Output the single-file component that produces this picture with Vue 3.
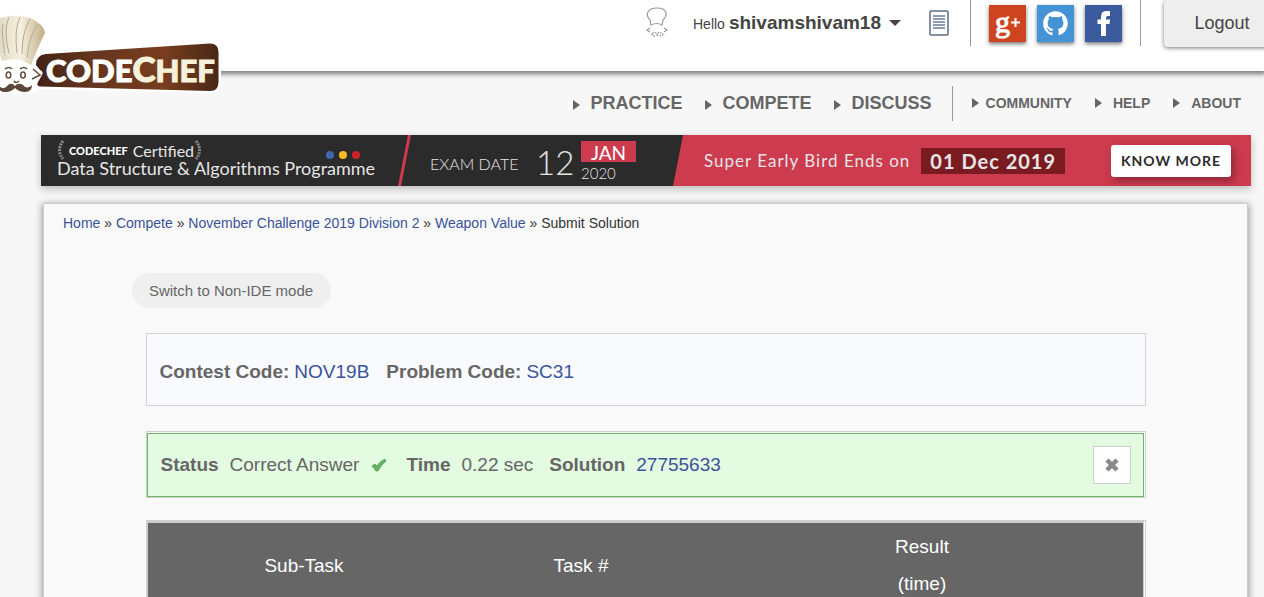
<script setup>
const mainNav = ['PRACTICE', 'COMPETE', 'DISCUSS']
const subNav = ['COMMUNITY', 'HELP', 'ABOUT']
const crumbs = ['Home', 'Compete', 'November Challenge 2019 Division 2', 'Weapon Value']
</script>

<template>
  <div class="page">
    <header class="top">
      <a class="logo" href="#" aria-label="CodeChef">
        <svg width="224" height="86" viewBox="0 10 224 86">
          <defs>
            <linearGradient id="wood"><stop offset="0" stop-color="#432315" /><stop offset=".3" stop-color="#65351e" /><stop offset=".7" stop-color="#783d1f" /><stop offset="1" stop-color="#492816" /></linearGradient>
            <linearGradient id="hat"><stop offset="0" stop-color="#e2dac6" /><stop offset=".45" stop-color="#f5f0df" /><stop offset="1" stop-color="#c0ad86" /></linearGradient>
          </defs>
          <path d="M42 52L211 41Q221 41 221 51V84Q221 93 211 93L39 89L30 94H0V60L38 58Z" fill="#fff" />
          <path d="M46 54L210 43.500Q218.500 43.500 218.500 52V82Q218.500 91 210 91L40 86.500Q36 86 38 82L42 75Q44 72 40 70L36 65Q36 55 46 54Z" fill="url(#wood)" />
          <path d="M0 54Q20 48 31 60L34 68L40 75L32 80L28 89L0 92Z" fill="#fff" />
          <path d="M0 18Q17 13 30 18Q44 24 45 33Q38 47 31 65Q18 56 2 61L0 55Z" fill="url(#hat)" />
          <g fill="none" stroke="#b6aa91" stroke-width="1">
            <path d="M9 17Q3 29 9 54M20 17Q14 29 17 53M30 19Q22 32 22 54M38 24Q29 35 27 58M3 24Q1 30 5 56" />
            <path d="M0 55Q17 50 31 61" stroke="#eee9dc" />
          </g>
          <g fill="none" stroke="#66503f" stroke-width="1.600">
            <ellipse cx="8.500" cy="75" rx="2.300" ry="3" /><ellipse cx="23" cy="75" rx="2.300" ry="3" />
            <path d="M5 69Q9 66 12 69M20 69Q24 66 27 69M33 69L40 75L32 79M14 81Q16 84 19 81" />
          </g>
          <path d="M0 87Q5 90 8 85Q12 82 15 86Q18 82 23 85Q27 90 32 85Q32 92 25 92Q19 92 15 88Q11 92 6 92Q1 92 0 90Z" fill="#5d4639" />
          <text x="46" y="82" fill="#fff" stroke="#fff" class="logo-text">CODE<tspan fill="#f6f1db" stroke="#f6f1db"><tspan class="big">C</tspan>HEF</tspan></text>
        </svg>
      </a>
      <div class="user">
        <svg width="24" height="32" viewBox="0 0 24 32" fill="none" stroke="#999" stroke-width="1.200">
          <path d="M6 18L5 13Q1 9 3 5Q5 1 12 1Q20 1 21 6Q22 9 18 13L17 18Q12 15 6 18Z" />
          <path d="M5 21L2 23L5 25M19 21L22 23L19 25" /><path d="M7 27Q10 24 12 27Q15 24 18 27Q17 30 12 28Q7 30 7 27Z" stroke-dasharray="2 1" />
        </svg>
        <button class="account" type="button"><span>Hello</span> <b>shivamshivam18</b><i class="caret"></i></button>
        <svg class="doc" width="20" height="26" viewBox="0 0 20 26"><rect x="1" y="1" width="18" height="24" rx="1" fill="#fff" stroke="#5d6d85" stroke-width="1.500" /><path d="M4 6H16M4 9H16M4 12H16M4 15H16M4 18H16" stroke="#677d9b" stroke-width="1.500" /></svg>
      </div>
      <div class="social">
        <a href="#" class="google" aria-label="Google Plus"><svg width="37" height="37"><text x="6" y="27" class="g" fill="#fff">g</text><path d="M22 17.500H31M26.500 13V22" stroke="#fff" stroke-width="2" /></svg></a>
        <a href="#" class="github" aria-label="GitHub"><svg width="37" height="37" viewBox="-4 -4 24 24"><path fill="#fff" d="M8 0C3.580 0 0 3.580 0 8c0 3.540 2.290 6.530 5.470 7.590.4.070.55-.17.55-.38 0-.19-.01-.82-.01-1.490-2.010.37-2.530-.49-2.690-.94-.09-.23-.48-.94-.82-1.130-.28-.15-.68-.52-.01-.53.630-.01 1.080.58 1.230.82.720 1.210 1.870.87 2.330.66.070-.52.280-.87.510-1.070-1.780-.2-3.640-.89-3.640-3.950 0-.87.310-1.590.82-2.150-.08-.2-.36-1.020.08-2.120 0 0 .67-.21 2.200.82.640-.18 1.320-.27 2-.27s1.360.09 2 .27c1.530-1.040 2.200-.82 2.200-.82.440 1.100.160 1.920.080 2.120.510.560.820 1.270.820 2.150 0 3.070-1.870 3.750-3.650 3.950.290.250.540.730.540 1.480 0 1.070-.01 1.930-.01 2.200 0 .21.150.46.550.38A8.010 8.010 0 0 0 16 8c0-4.420-3.580-8-8-8Z" /></svg></a>
        <a href="#" class="facebook" aria-label="Facebook"><svg width="37" height="37"><path fill="#fff" d="M16 31V19H12.500V14.500H16V12Q16 6 21 6H25V11H22.500Q21 11 21 13V14.500H25L24.500 19H21V31Z" /></svg></a>
      </div>
      <button class="logout" type="button">Logout</button>
    </header>

    <nav class="nav">
      <div class="main-nav"><a v-for="item in mainNav" :key="item" href="#">{{ item }}</a></div>
      <div class="sub-nav"><a v-for="item in subNav" :key="item" href="#">{{ item }}</a></div>
    </nav>

    <section class="banner">
      <div class="programme">
        <div class="certified">
          <svg width="8" height="20" viewBox="0 0 8 20"><path d="M6 1Q-1 10 6 19" fill="none" stroke="#888" stroke-width="3" stroke-dasharray="2 1" /></svg>
          <b>CODECHEF</b><span>Certified</span>
          <svg width="8" height="20" viewBox="0 0 8 20"><path d="M2 1Q9 10 2 19" fill="none" stroke="#888" stroke-width="3" stroke-dasharray="2 1" /></svg>
          <span class="dots"><i></i><i></i><i></i></span>
        </div>
        <div class="title">Data Structure &amp; Algorithms Programme</div>
      </div>
      <div class="slash"></div>
      <div class="exam">
        <span class="label">EXAM DATE</span>
        <span class="day">12</span>
        <div class="month"><b>JAN</b><span>2020</span></div>
      </div>
      <div class="offer">
        <span class="ends">Super Early Bird Ends on</span>
        <strong>01 Dec 2019</strong>
        <button class="more" type="button">KNOW MORE</button>
      </div>
    </section>

    <main class="content">
      <div class="crumbs">
        <template v-for="c in crumbs" :key="c"><a href="#">{{ c }}</a> » </template>Submit Solution
      </div>
      <div class="body">
        <button class="switch" type="button">Switch to Non-IDE mode</button>
        <div class="codes">
          <div><b>Contest Code:</b><a href="#">NOV19B</a></div>
          <div><b>Problem Code:</b><a href="#">SC31</a></div>
        </div>
        <div class="frame status-frame">
          <div class="status">
            <b>Status</b><span>Correct Answer</span>
            <svg class="tick" width="16" height="16" viewBox="0 0 16 16"><path d="M1 9L4 7L6 9Q9 4 14 2L15 4Q10 8 7 14H5Z" fill="#63b365" stroke="#4d9d51" stroke-width=".7" /></svg>
            <b>Time</b><span>0.22 sec</span>
            <b class="solution">Solution</b><a href="#">27755633</a>
            <button class="close" type="button" aria-label="Close"><svg width="14" height="14" viewBox="0 0 14 14"><path d="M2 2L12 12M12 2L2 12" stroke="#888" stroke-width="4.500" /></svg></button>
          </div>
        </div>
        <div class="frame table-frame">
          <table>
            <thead><tr><th class="c1">Sub-Task</th><th class="c2">Task #</th><th>Result<br />(time)</th></tr></thead>
          </table>
        </div>
      </div>
    </main>
  </div>
</template>

<style>
body { margin: 0; background: #f7f7f7; }
</style>

<style scoped>
* { box-sizing: border-box; }
.page { overflow: hidden; font-family: "Liberation Sans", Arial, sans-serif; color: #666; }
button { font-family: inherit; margin: 0; border: 0; padding: 0; cursor: pointer; }
a { color: #3a539b; text-decoration: none; }
svg { display: block; flex: none; }
.top { position: relative; display: flex; justify-content: flex-end; align-items: flex-start; height: 71px; background: #fff; box-shadow: 0 1px 5px 2px #777; }
.logo { position: absolute; left: 0; top: 10px; z-index: 2; }
.logo-text { font: 900 31px Lato, sans-serif; stroke-width: 1px; }
.big { font-size: 35px; }
.user { display: flex; align-items: center; height: 46px; padding-right: 21px; }
.account { display: flex; align-items: baseline; margin-left: 24px; background: none; color: #444; font-size: 14px; }
.account b { margin-left: 4px; font-size: 19px; }
.caret { align-self: center; margin-left: 8px; border: 6px solid transparent; border-top-color: #444; border-bottom: 0; }
.doc { margin-left: 28px; }
.social { display: flex; gap: 11px; height: 46px; padding: 5px 18px; border: solid #999; border-width: 0 1px; }
.social a { height: 37px; box-shadow: 0 2px 4px #777; }
.google { background: #cf4420; }
.github { background: #4493d4; }
.facebook { background: #3c5a9e; }
.g { font: 30px "Liberation Serif", serif; stroke: #fff; stroke-width: 1px; }
.logout { width: 116px; height: 47px; margin: 0 -16px 0 23px; border-radius: 4px; background: #eee; color: #444; font-size: 18px; box-shadow: 0 1px 4px #777; }
.nav { display: flex; justify-content: flex-end; align-items: center; height: 64px; padding-right: 23px; }
.nav a { display: flex; align-items: center; color: #666; font-weight: 700; }
.nav a::before { content: ""; border: 5px solid transparent; border-left: 7px solid #666; border-right: 0; }
.main-nav { display: flex; gap: 22px; height: 35px; padding: 1px 20px 0 0; border-right: 1px solid #999; font-size: 18px; }
.main-nav a::before { margin: 3px 11px 0 0; }
.sub-nav { display: flex; gap: 23px; padding-left: 19px; font-size: 14px; }
.sub-nav a::before { margin-right: 11px; }
.sub-nav a:first-child::before { margin-right: 7px; }
.banner { display: flex; height: 51px; margin: 0 13px 0 41px; background: #2b2b2b; color: #e6e6e6; font-family: Lato, sans-serif; box-shadow: 0 3px 8px #bbb; }
.programme { width: 357px; padding: 6px 0 0 16px; }
.certified { display: flex; align-items: center; height: 18px; font-size: 16px; }
.certified b { margin: 0 5px 0 4px; font-size: 11px; font-weight: 900; color: #fff; }
.dots { display: flex; gap: 5px; margin: 10px 0 0 124px; }
.dots i { width: 8px; height: 8px; border-radius: 50%; background: #4267b2; }
.dots i:nth-child(2) { background: #fbb829; }
.dots i:nth-child(3) { background: #cf2026; }
.title { font-size: 18px; line-height: 18px; white-space: nowrap; }
.slash { width: 13px; background: #cd3b4e; clip-path: polygon(10px 0, 100% 0, 3px 100%, 0 100%); }
.exam { display: flex; align-items: center; width: 262px; padding-left: 19px; }
.label { width: 106px; padding-top: 6px; font-size: 16px; font-weight: 300; }
.day { width: 45px; padding-top: 2px; font-size: 33px; font-weight: 300; }
.month { padding-top: 3px; }
.month b { display: block; width: 55px; height: 21px; background: #cd3b4e; color: #fff; font-size: 19px; line-height: 23px; font-weight: 400; text-align: center; }
.month span { display: block; font-size: 15px; line-height: 22px; font-weight: 300; }
.offer { display: flex; flex: 1; align-items: center; padding: 0 20px 0 31px; background: #cd3b4e; clip-path: polygon(10px 0, 100% 0, 100% 100%, 0 100%); }
.ends { font-size: 17px; letter-spacing: 1px; white-space: nowrap; }
.offer strong { margin-left: 11px; padding: 0 9px; background: #7a1b22; font-size: 20px; line-height: 26px; letter-spacing: 1px; white-space: nowrap; }
.more { width: 120px; height: 32px; margin-left: auto; border-radius: 3px; background: #fff; color: #2b2b2b; font: 700 14px Lato, sans-serif; letter-spacing: 1px; box-shadow: 3px 4px 8px #8b2735; }
.content { margin: 17px 16px 0 43px; padding: 11px 19px 0; border: 1px solid #ccc; background: #f9f9f9; box-shadow: 0 2px 7px 1px #999; }
.crumbs { color: #333; font-size: 14px; line-height: 16px; white-space: pre-wrap; }
.body { max-width: 1000px; margin: 42px auto 0; }
.switch { display: block; width: 199px; height: 35px; margin-left: -14px; border-radius: 18px; background: #efefef; color: #666; font-size: 15px; }
.codes { display: flex; gap: 17px; align-items: center; height: 73px; margin: 25px 0; padding: 4px 13px 0; border: 1px solid #d3d3d3; background: #f8fafd; font-size: 19px; }
.codes a { margin-left: 5px; }
.frame { border: 1px solid #d0d0d0; background: #fff; }
.status-frame { padding: 1px 1px 0 0; }
.status { display: flex; align-items: center; height: 64px; padding: 0 12px 0 13px; border: 1px solid #6db766; background: #e3fbe1; font-size: 19px; }
.status span, .status a { margin-left: 11px; }
.tick { margin: 0 19px 0 12px; }
.solution { margin-left: 16px; }
.close { display: flex; align-items: center; justify-content: center; width: 38px; height: 38px; margin-left: auto; border: 1px solid #ccc; background: #fff; }
.table-frame { margin-top: 22px; padding-right: 1px; }
table { width: 100%; border: 1px solid #ccc; border-top-width: 2px; border-collapse: separate; border-spacing: 0; background: #666; color: #fff; font-size: 19px; line-height: 37px; }
th { padding: 5px 0; font-weight: 400; }
.c1 { width: 313px; }
.c2 { width: 241px; }
</style>
